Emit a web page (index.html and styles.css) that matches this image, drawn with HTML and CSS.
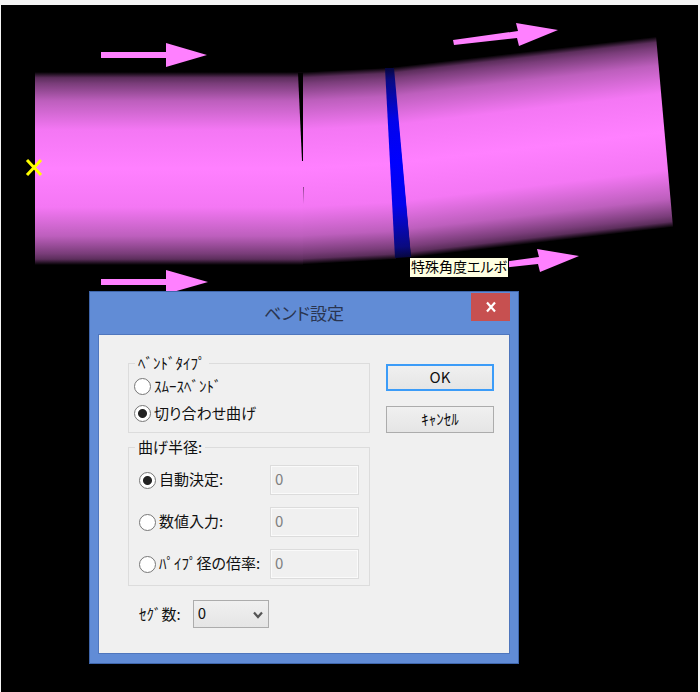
FILE: index.html
```html
<!DOCTYPE html>
<html lang="ja">
<head>

<meta charset="UTF-8">
<meta name="viewport" content="width=device-width, initial-scale=1.0">
<title>ベンド設定</title>

<link rel="stylesheet" href="styles.css">
</head>
<body>

<main class="viewport">
    <!-- 配管ビュー -->
    <svg class="scene" viewBox="1 5 697 687" aria-hidden="true">
        <defs>
            <linearGradient id="shade">
                <stop offset="0" stop-color="#000000"/>
                <stop offset="0.03" stop-color="#5c2e5c"/>
                <stop offset="0.06" stop-color="#7a3d7a"/>
                <stop offset="0.15" stop-color="#bd5fbd"/>
                <stop offset="0.3" stop-color="#f477f4"/>
                <stop offset="0.5" stop-color="#ff80ff"/>
                <stop offset="0.7" stop-color="#f477f4"/>
                <stop offset="0.85" stop-color="#bd5fbd"/>
                <stop offset="0.94" stop-color="#7a3d7a"/>
                <stop offset="0.97" stop-color="#5c2e5c"/>
                <stop offset="1" stop-color="#000000"/>
            </linearGradient>
            <linearGradient id="shade-left" href="#shade" gradientUnits="userSpaceOnUse" x1="0" y1="72" x2="0" y2="265"/>
            <linearGradient id="shade-mid" href="#shade" gradientUnits="userSpaceOnUse" x1="303" y1="72" x2="313" y2="264"/>
            <linearGradient id="shade-right" href="#shade" gradientUnits="userSpaceOnUse" x1="394" y1="67" x2="416" y2="257"/>
            <linearGradient id="shade-blue" gradientUnits="userSpaceOnUse" x1="388" y1="68" x2="402" y2="258">
                <stop offset="0" stop-color="#06063c"/>
                <stop offset="0.06" stop-color="#0a0a80"/>
                <stop offset="0.28" stop-color="#0303ec"/>
                <stop offset="0.5" stop-color="#0000ff"/>
                <stop offset="0.72" stop-color="#0303ec"/>
                <stop offset="0.94" stop-color="#0a0a80"/>
                <stop offset="1" stop-color="#06063c"/>
            </linearGradient>
        </defs>

        <polygon points="35,72 303,72 303,265 35,265" fill="url(#shade-left)"/>
        <polygon points="302,72 386,68 396,259 303,265" fill="url(#shade-mid)"/>
        <polygon points="393,67 656,36 673,227 411,258" fill="url(#shade-right)"/>
        <polygon points="385,68 394,68 411,257 395,258" fill="url(#shade-blue)"/>
        <polygon points="298,73 303,73 303,161 302,161" fill="#000000"/>
        <polygon points="303,187 304,187 304,204" fill="#8a458a"/>

        <!-- 流れ方向 -->
        <g fill="#ff80ff">
            <path d="M101 52H166V43L207 55L166 67V58H101Z"/>
            <path d="M101 279H166V270L208 282L166 294V285H101Z"/>
            <path d="M453 40L518 31L516 23L558 30L519 46L517 38L454 45Z"/>
            <path d="M474 266L539 257L537 249L579 256L540 272L538 264L475 271Z"/>
        </g>

        <path d="M27 160L41 175M41 160L27 175" stroke="#ffff00" stroke-width="3"/>
    </svg>

    <div class="tooltip" role="tooltip">特殊角度エルボ</div>

    <!-- ベンド設定ダイアログ -->
    <section class="dialog" role="dialog" aria-labelledby="dialog-title">
        <header class="titlebar">
            <h1 id="dialog-title">ベンド設定</h1>
            <button type="button" class="close" aria-label="閉じる">
                <svg width="12" height="12" viewBox="0 0 12 12"><path d="M2 1.5L10 10.5M10 1.5L2 10.5" stroke="#fff" stroke-width="2.2"/></svg>
            </button>
        </header>

        <form class="dialog-body">
            <div class="settings">
                <fieldset class="group">
                    <legend>ﾍﾞﾝﾄﾞﾀｲﾌﾟ</legend>
                    <label class="type-row"><input type="radio" name="bend-type"><span>ｽﾑｰｽﾍﾞﾝﾄﾞ</span></label>
                    <label class="type-row"><input type="radio" name="bend-type" checked><span>切り合わせ曲げ</span></label>
                </fieldset>

                <fieldset class="group group-radius">
                    <legend>曲げ半径:</legend>
                    <div class="radius-row">
                        <label><input type="radio" name="radius" checked><span>自動決定:</span></label>
                        <input type="text" class="value" value="0" aria-label="自動決定" disabled>
                    </div>
                    <div class="radius-row">
                        <label><input type="radio" name="radius"><span>数値入力:</span></label>
                        <input type="text" class="value" value="0" aria-label="数値入力" disabled>
                    </div>
                    <div class="radius-row">
                        <label><input type="radio" name="radius"><span>ﾊﾟｲﾌﾟ径の倍率:</span></label>
                        <input type="text" class="value" value="0" aria-label="ﾊﾟｲﾌﾟ径の倍率" disabled>
                    </div>
                </fieldset>

                <div class="segment-row">
                    <label for="segments">ｾｸﾞ数:</label>
                    <div class="select-box">
                        <select id="segments">
                            <option>0</option>
                        </select>
                        <svg class="chevron" width="10" height="8" viewBox="0 0 10 8"><path d="M1 1.5L5 6L9 1.5" fill="none" stroke="#555" stroke-width="2.2"/></svg>
                    </div>
                </div>
            </div>

            <div class="actions">
                <button type="button" class="btn btn-default">OK</button>
                <button type="button" class="btn">ｷｬﾝｾﾙ</button>
            </div>
        </form>
    </section>
</main>

</body>
</html>
```
FILE: styles.css
```css
* {
    box-sizing: border-box;
}

body {
    margin: 0;
    padding: 5px 2px 0 1px;
    min-height: 100vh;
    background-color: #f4f4f4;
    font-family: "Noto Sans CJK JP", sans-serif;
    font-feature-settings: "palt";
    font-size: 15px;
    line-height: 20px;
    color: #111;
}

button, input, select {
    font: inherit;
    font-feature-settings: inherit;
    color: inherit;
}

.viewport {
    position: relative;
    min-height: calc(100vh - 5px);
    background-color: #000;
}

.scene {
    display: block;
    width: 100%;
}

.tooltip {
    position: absolute;
    left: 408px;
    top: 252px;
    padding: 0 1px 2px;
    border: 1px solid #000;
    background-color: #ffffe1;
    color: #000;
    font-size: 14px;
    line-height: 17px;
    white-space: nowrap;
}

/* Dialog */
.dialog {
    position: absolute;
    left: 88px;
    top: 286px;
    width: 430px;
    padding: 0 8px 9px;
    border: 1px solid #3f66ab;
    background-color: #618cd6;
}

.titlebar {
    position: relative;
    height: 42px;
    padding-top: 9px;
    text-align: center;
}

.titlebar h1 {
    margin: 0;
    font-size: 17px;
    line-height: 24px;
    font-weight: normal;
    color: #2a3550;
}

.close {
    position: absolute;
    right: 0;
    top: 1px;
    display: flex;
    align-items: center;
    justify-content: center;
    width: 39px;
    height: 28px;
    padding: 0;
    border: none;
    background-color: #c75050;
}

.dialog-body {
    display: flex;
    gap: 16px;
    padding: 18px 15px 25px 29px;
    border: 1px solid #4f76bd;
    background-color: #f0f0f0;
}

.settings {
    flex: 1;
}

/* Groups */
.group {
    min-width: 0;
    margin: 0 0 4px;
    padding: 0 10px 5px 5px;
    border: 1px solid #dcdcdc;
}

.group legend {
    margin-left: 1px;
    padding: 0 3px;
}

.group-radius {
    margin-bottom: 14px;
    padding: 2px 10px 0;
}

.group-radius legend {
    margin-left: -4px;
}

.type-row {
    display: flex;
    align-items: center;
    height: 27px;
}

.radius-row {
    display: flex;
    align-items: center;
    justify-content: space-between;
    height: 42px;
}

.radius-row label {
    display: flex;
    align-items: center;
    white-space: nowrap;
}

.group span {
    padding-bottom: 2px;
}

input[type="radio"] {
    appearance: none;
    flex: none;
    width: 17px;
    height: 17px;
    margin: 0 3px 0 0;
    border: 1px solid #777;
    border-radius: 50%;
    background-color: #fff;
}

input[type="radio"]:checked {
    background-image: radial-gradient(circle, #222 4px, transparent 5px);
}

.value {
    width: 89px;
    height: 30px;
    padding: 0 4px 4px;
    border: 1px solid #dcdcdc;
    box-shadow: inset 0 0 0 1px #fafafa;
    background-color: #f0f0f0;
    color: #808080;
}

/* Segment count */
.segment-row {
    display: flex;
    align-items: center;
    gap: 12px;
    padding-left: 11px;
}

.select-box {
    position: relative;
}

.select-box select {
    appearance: none;
    display: block;
    width: 76px;
    height: 28px;
    padding: 0 4px 2px;
    border: 1px solid #acacac;
    border-radius: 0;
    background: linear-gradient(#f0f0f0, #e5e5e5);
}

.chevron {
    position: absolute;
    right: 6px;
    top: 11px;
    pointer-events: none;
}

/* Buttons */
.actions {
    display: flex;
    flex-direction: column;
    gap: 15px;
    width: 108px;
    padding-top: 11px;
}

.btn {
    height: 27px;
    padding: 0 0 2px;
    border: 1px solid #acacac;
    background: linear-gradient(#f0f0f0, #e5e5e5);
}

.btn-default {
    border: 2px solid #3c9cf8;
}
```
